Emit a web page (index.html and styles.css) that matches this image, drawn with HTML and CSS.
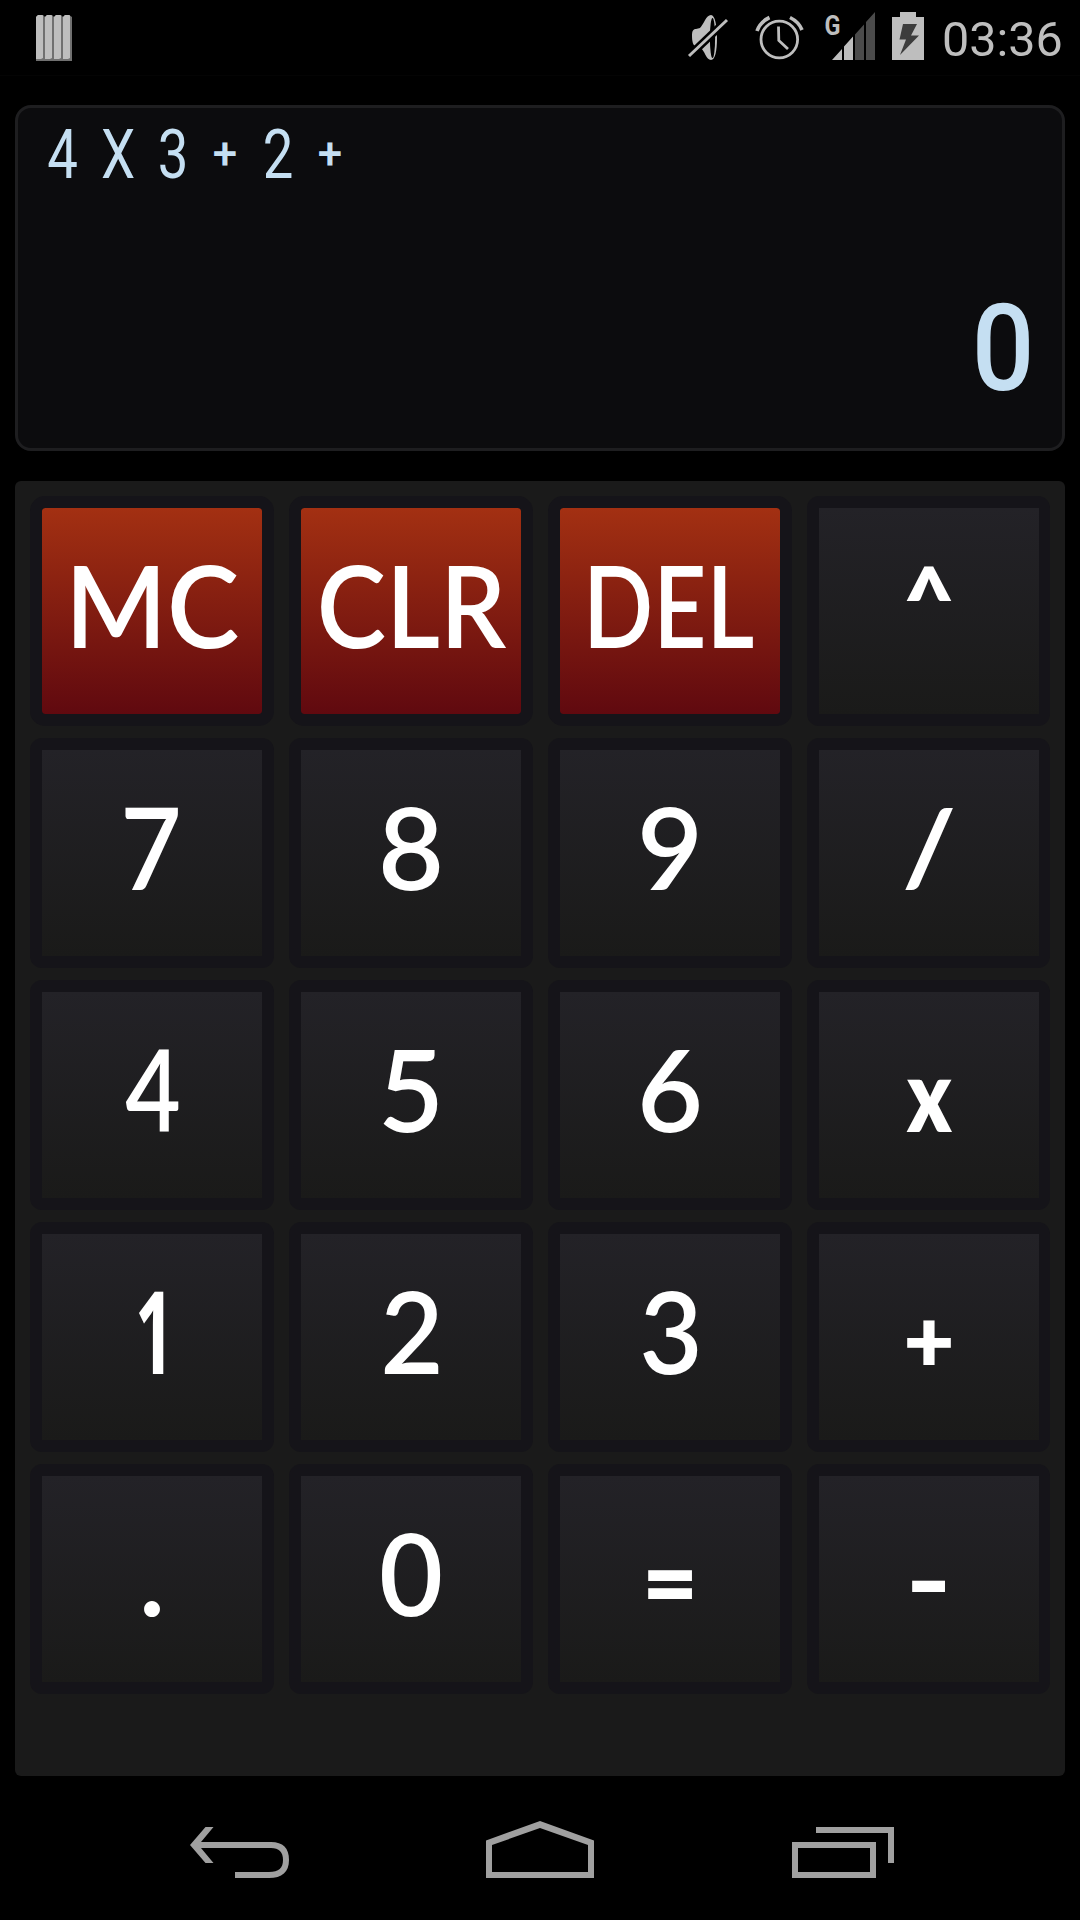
FILE: index.html
```html
<!DOCTYPE html>
<html lang="en">
<head>
<meta charset="utf-8">
<title>Calculator</title>
<link rel="stylesheet" href="styles.css">
</head>
<body>
<header class="status">
  <svg class="bars" width="36" height="75" viewBox="36 0 36 75">
    <path fill="#707070" d="M36 17l2-2h5l2 2 2-2h5l2 2 2-2h5l2 2 2-2h4l3 2v44H36z"/>
    <path fill="#bebebe" d="M36 17l2-2h4.500l.5 1v42l-2 1h-5zM45 17l2-2h4.500l.5 1v42l-2 1h-5zM54 17l2-2h4.500l.5 1v42l-2 1h-5zM63 17l2-2h4.500l.5 1v42l-2 1h-5z"/>
  </svg>
  <svg class="mute" width="42" height="75" viewBox="687 0 42 75">
    <path fill="#bebebe" d="M692 36C692 31 693 29 696 29L700 28C704 24 706 15 711 15C715 15 717 26 717 38C717 51 715 60 711 60C706 60 705 51 700 47L696 46C693 46 692 41 692 36z"/>
    <ellipse cx="712.5" cy="38" rx="2.6" ry="20" fill="#000"/>
    <path stroke="#000" stroke-width="8" d="M689 56L727 20"/>
    <path stroke="#bebebe" stroke-width="3" d="M689 56L727 20"/>
  </svg>
  <svg class="alarm" width="50" height="75" viewBox="755 0 50 75">
    <g fill="none" stroke="#bebebe" stroke-width="2.8">
      <circle cx="779.3" cy="39.5" r="18.3"/>
      <path stroke-width="3.6" d="M757 31Q760 22 769.5 17.5M790 17.5Q799 22 802 30"/>
      <path d="M778.5 26.5L778.8 40.5L788 49"/>
    </g>
  </svg>
  <svg class="signal" width="51" height="75" viewBox="825 0 51 75">
    <text x="824.5" y="34.6" class="net" textLength="16" lengthAdjust="spacingAndGlyphs">G</text>
    <path fill="#bebebe" d="M832 60L842 49V60zM844 60V46.500L853 36.500V60z"/>
    <path fill="#4b4b4b" d="M855 60V34.500L864 24.500V60zM866 60V22L875 12V60z"/>
  </svg>
  <svg class="battery" width="32" height="75" viewBox="892 0 32 75">
    <path fill="#bebebe" d="M892 17H900V12H916V17H924V60H892z"/>
    <path fill="#3c3c3c" d="M903 24H917L911 35.500H919L900 55L906 39.500H899.500z"/>
  </svg>
  <time class="clock">03:36</time>
</header>

<main class="app">
  <section class="display">
    <div class="expr"><span>4</span><span>X</span><span>3</span><span class="op">+</span><span>2</span><span class="op">+</span></div>
    <div class="result"><span>0</span></div>
  </section>
  <section class="keypad">
    <button class="key red"><span class="mc">MC</span></button>
    <button class="key red"><span class="clr">CLR</span></button>
    <button class="key red"><span class="del">DEL</span></button>
    <button class="key"><span class="pow">^</span></button>
    <button class="key"><span class="seven">7</span></button>
    <button class="key"><span>8</span></button>
    <button class="key"><span>9</span></button>
    <button class="key"><span class="div">/</span></button>
    <button class="key"><span class="four">4</span></button>
    <button class="key"><span>5</span></button>
    <button class="key"><span>6</span></button>
    <button class="key"><span class="mul">x</span></button>
    <button class="key"><span class="one">1</span></button>
    <button class="key"><span class="slim">2</span></button>
    <button class="key"><span class="slim">3</span></button>
    <button class="key"><span class="plus">+</span></button>
    <button class="key"><span class="dot">.</span></button>
    <button class="key"><span class="zero">0</span></button>
    <button class="key"><span class="eq">=</span></button>
    <button class="key"><span class="minus">-</span></button>
  </section>
</main>

<nav class="nav">
  <svg width="100" height="60" viewBox="190 1820 100 60">
    <path fill="#a0a0a0" d="M205.500 1827H213.500L201 1842H271C283 1842 289 1848 289 1860C289 1872 282 1878 269 1878H235V1872H269C279 1872 283 1868 283 1860C283 1852 279 1848 271 1848H201L213.500 1863H205.500L190 1845z"/>
  </svg>
  <svg class="home" width="108" height="60" viewBox="486 1820 108 60">
    <path fill="#a0a0a0" fill-rule="evenodd" d="M540 1821L594 1840.500V1878H486V1840.500zM540 1828L492 1845V1872H588V1845z"/>
  </svg>
  <svg width="102" height="60" viewBox="792 1820 102 60">
    <path fill="#a0a0a0" fill-rule="evenodd" d="M792 1842H876V1878H792zM798 1848V1872H870V1848zM816 1827H894V1863H888V1833H816z"/>
  </svg>
</nav>
</body>
</html>
```
FILE: styles.css
```css
* { box-sizing: border-box; }

body {
  margin: 0;
  width: 1080px;
  height: 1920px;
  display: flex;
  flex-direction: column;
  background: #000;
  overflow: hidden;
}

svg { display: block; flex: none; }

/* status bar */
.status {
  display: flex;
  height: 76px;
  padding: 0 16px 0 36px;
  border-bottom: 1px solid #040404;
}
.bars { margin-right: auto; }
.mute { margin-right: 26px; }
.alarm { margin-right: 20px; }
.signal { margin-right: 16px; }
.battery { margin-right: 18px; }
.net { font: 700 27px Roboto, sans-serif; fill: #bebebe; }
.clock {
  width: 122px;
  font: 48.500px/79px Roboto, sans-serif;
  color: #bebebe;
}

.app {
  display: flex;
  flex-direction: column;
  gap: 30px;
  padding: 29px 15px 0;
}

/* display */
.display {
  display: flex;
  flex-direction: column;
  justify-content: space-between;
  height: 346px;
  border: 3px solid #1e1e20;
  border-radius: 16px;
  background: #0c0c0e;
  color: #c5dff2;
  font-family: Roboto, sans-serif;
}
.expr {
  display: grid;
  grid-template-columns: 55px 56px 54px 50px 56px 48px;
  padding-left: 17px;
  height: 93px;
  font-size: 69px;
  line-height: 93px;
  text-align: center;
}
.expr span { transform: scaleX(.79); }
.expr .op {
  font-size: 44px;
  font-weight: 500;
  transform: none;
  line-height: 92px;
}
.result {
  display: flex;
  justify-content: flex-end;
  padding-right: 25px;
  height: 197px;
  font-size: 120px;
  font-weight: 500;
  line-height: 196px;
}
.result span { transform: scaleX(.92); }

/* keypad */
.keypad {
  display: grid;
  grid-template-columns: 244px 244px 244px 243px;
  grid-auto-rows: 230px;
  gap: 12px 15px;
  height: 1295px;
  padding: 15px;
  border-radius: 6px;
  background: #1a1a1a;
}
.key {
  margin: 0;
  padding: 0;
  border: 12px solid #151419;
  border-radius: 12px;
  background: linear-gradient(#232227, #1a1a19) padding-box, #151419;
  color: #fff;
  font: 600 114px/192px Lato, sans-serif;
  display: flex;
  align-items: flex-start;
  justify-content: center;
  white-space: nowrap;
}
.key:nth-child(4n) { border-right-width: 11px; }
.key span { display: block; }
.red {
  border-radius: 15px;
  background: linear-gradient(#a33012, #60090f) padding-box, #151419;
}
.key .mc { transform: scaleX(.955); }
.key .clr { transform: translateX(1px) scaleX(.915); }
.key .del { transform: translateX(-1px) scaleX(.81); }
.key .pow { font-size: 87px; font-weight: 800; line-height: 177px; }
.key .seven { transform: translateX(-1px) scaleX(.93); }
.key .four { transform: translateX(1px) scaleX(.84); }
.key .slim { transform: translateX(1px) scaleX(.96); }
.key .zero { transform: scaleX(.97); }
.key .div { font-size: 103px; font-weight: 700; line-height: 190px; transform: scaleX(1.13); }
.key .mul { font-size: 100px; font-weight: 800; line-height: 203px; transform: scaleX(.82); }
.key .one { font-family: "Open Sans", sans-serif; font-weight: 700; transform: translateX(3px) scaleX(.6); }
.key .plus { font-size: 88px; font-weight: 800; line-height: 209px; }
.key .dot { font-size: 114px; }
.key .eq { font-size: 96px; font-weight: 800; line-height: 207px; }
.key .minus { font-size: 110px; font-weight: 700; line-height: 200px; transform: scaleX(1.15); }

/* navigation bar */
.nav {
  display: flex;
  justify-content: space-between;
  margin-top: 44px;
  padding: 0 186px 0 190px;
}
.home { margin: 0 1px 0 -1px; }
```
